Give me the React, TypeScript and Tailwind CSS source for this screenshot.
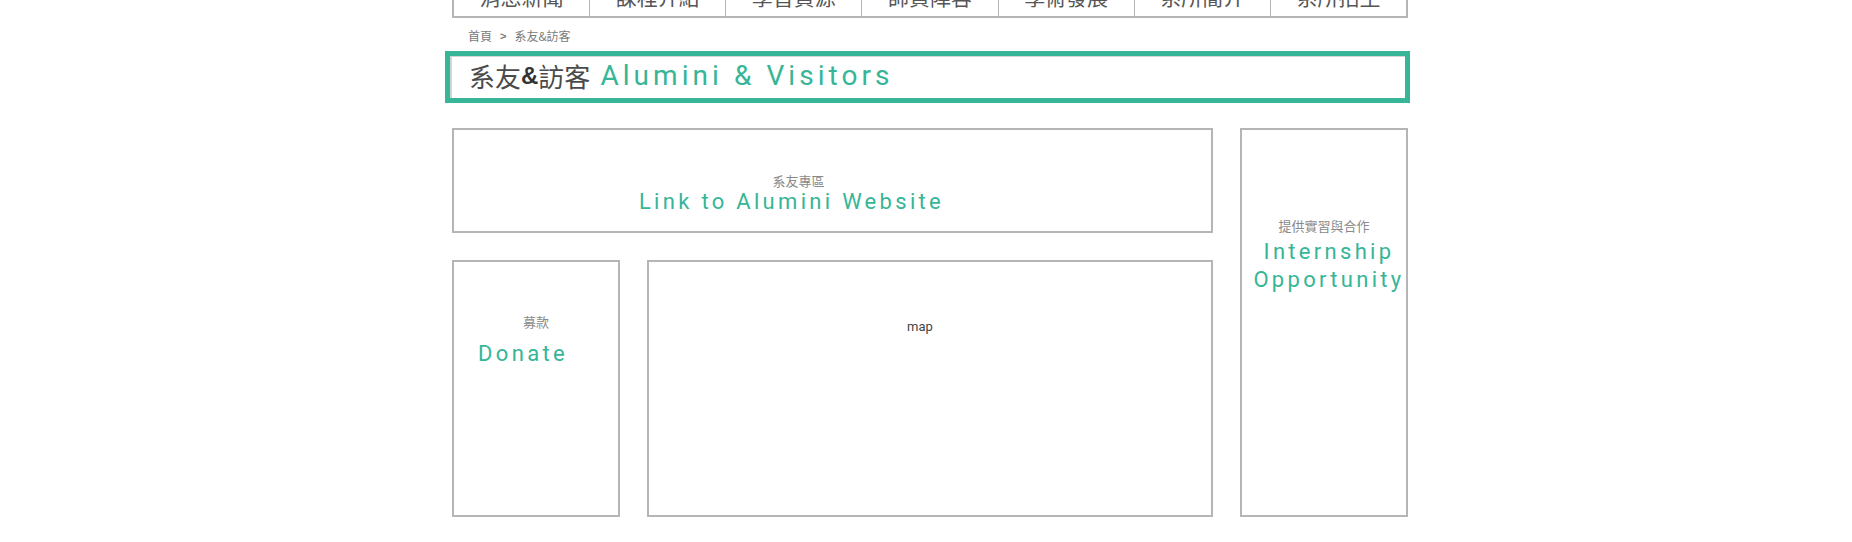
import React from 'react';

const navItems = ['消息新聞', '課程介紹', '學習資源', '師資陣容', '學術發展', '系所簡介', '系所招生'];

const cjk = "font-['Noto_Sans_CJK_TC',sans-serif]";
const latin = "font-['Roboto','Noto_Sans_CJK_TC',sans-serif]";

const Label = ({
  zh,
  en,
  className = '',
  zhClass = '',
}: {
  zh: string;
  en: React.ReactNode;
  className?: string;
  zhClass?: string;
}) => (
  <>
    <p className={`${cjk} text-[13px] leading-[17px] text-[#8a8a8a] ${zhClass}`}>{zh}</p>
    <p className={`${latin} text-[22px] leading-[28px] tracking-[0.15em] text-[#36b597] ${className}`}>{en}</p>
  </>
);

export default function App() {
  return (
    <div className="min-h-[542px] bg-white overflow-hidden">
      <div className="ml-[445px] w-[965px]">
        {/* top menu, mostly scrolled off */}
        <nav className="ml-[7px] w-[956px] h-[41px] -mt-[23px] flex border-2 border-t-0 border-[#b5b5b5]">
          {navItems.map((item, i) => (
            <div
              key={item}
              className={`flex-1 flex items-center justify-center ${cjk} text-[21px] text-[#555] ${
                i < navItems.length - 1 ? 'border-r border-[#b5b5b5]' : ''
              }`}
            >
              {item}
            </div>
          ))}
        </nav>

        <div className={`ml-[23px] mt-[9px] h-[18px] flex items-center gap-[6px] ${cjk} text-[12px] text-[#7a7a7a]`}>
          <span>首頁</span>
          <span className="font-['Liberation_Sans',sans-serif] font-bold text-[11px] px-[2px]">&gt;</span>
          <span>系友&amp;訪客</span>
        </div>

        <div className="mt-[6px] h-[52px] border-[5px] border-[#36b597]">
          <div className="h-full flex items-center border-l-2 border-t border-[#d4d4d4] pl-[17px] pb-[4px] gap-[10px]">
            <h1 className={`${cjk} text-[26px] text-[#4a4a4a] flex items-center`}>
              系友<span className="font-['Liberation_Sans',sans-serif] font-bold text-[#333] text-[24px]">&amp;</span>訪客
            </h1>
            <span className={`${latin} text-[28px] tracking-[0.145em] text-[#36b597]`}>Alumini &amp; Visitors</span>
          </div>
        </div>

        <div className="ml-[7px] mt-[25px] flex gap-[27px]">
          <div className="w-[761px] flex flex-col gap-[27px]">
            <a className="h-[105px] border-2 border-[#b5b5b5] flex flex-col items-center pt-[42px] pr-[82px]">
              <Label zh="系友專區" en="Link to Alumini Website" className="-mt-[1px]" zhClass="pl-[14px]" />
            </a>
            <div className="h-[257px] flex gap-[27px]">
              <a className="w-[168px] border-2 border-[#b5b5b5] flex flex-col items-center pt-[51px]">
                <Label zh="募款" en="Donate" className="mt-[10px] pr-[26px]" />
              </a>
              <div className="flex-1 border-2 border-[#b5b5b5] flex justify-center pt-[56px] pr-[20px]">
                <span className="font-['Roboto',sans-serif] text-[13px] leading-[17px] text-[#444]">map</span>
              </div>
            </div>
          </div>
          <a className="w-[168px] h-[389px] border-2 border-[#b5b5b5] flex flex-col items-center pt-[87px]">
            <Label
              zh="提供實習與合作"
              en={
                <>
                  Internship
                  <br />
                  Opportunity
                </>
              }
              className="mt-[4px] pl-[10px] text-center"
            />
          </a>
        </div>
      </div>
    </div>
  );
}
